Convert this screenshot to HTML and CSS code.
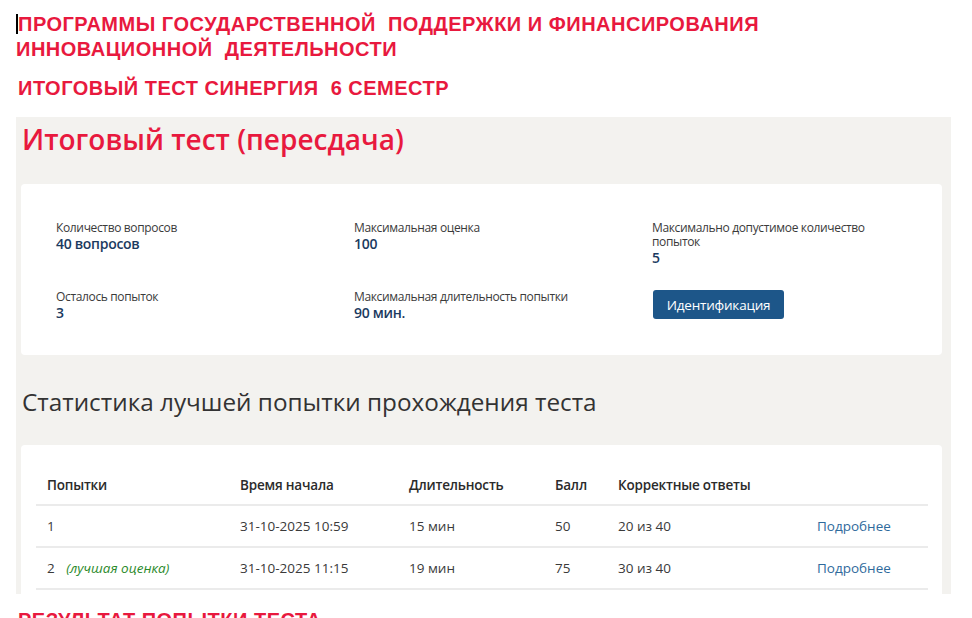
FILE: index.html
```html
<!DOCTYPE html>
<html lang="ru">
<head>
<meta charset="utf-8">
<title>Итоговый тест</title>
<link rel="stylesheet" href="styles.css">
</head>
<body>
<h2 class="red-head first"><span class="caret"></span>ПРОГРАММЫ ГОСУДАРСТВЕННОЙ&nbsp; ПОДДЕРЖКИ И ФИНАНСИРОВАНИЯ ИННОВАЦИОННОЙ&nbsp; ДЕЯТЕЛЬНОСТИ</h2>
<h2 class="red-head second">ИТОГОВЫЙ ТЕСТ СИНЕРГИЯ&nbsp; 6 СЕМЕСТР</h2>

<div class="panel">
  <h1 class="title">Итоговый тест (пересдача)</h1>

  <div class="card info">
    <div class="info-grid">
      <div class="item">
        <div class="label">Количество вопросов</div>
        <div class="value">40 вопросов</div>
      </div>
      <div class="item">
        <div class="label">Максимальная оценка</div>
        <div class="value">100</div>
      </div>
      <div class="item">
        <div class="label">Максимально допустимое количество попыток</div>
        <div class="value">5</div>
      </div>
      <div class="item">
        <div class="label">Осталось попыток</div>
        <div class="value">3</div>
      </div>
      <div class="item">
        <div class="label">Максимальная длительность попытки</div>
        <div class="value">90 мин.</div>
      </div>
      <div class="item">
        <button class="btn">Идентификация</button>
      </div>
    </div>
  </div>

  <h2 class="stats-title">Статистика лучшей попытки прохождения теста</h2>

  <div class="card stats">
    <table class="tbl">
      <colgroup>
        <col class="w1"><col class="w2"><col class="w3"><col class="w4"><col class="w5"><col class="w6">
      </colgroup>
      <thead>
        <tr><th>Попытки</th><th>Время начала</th><th>Длительность</th><th>Балл</th><th>Корректные ответы</th><th></th></tr>
      </thead>
      <tbody>
        <tr><td>1</td><td>31-10-2025 10:59</td><td>15 мин</td><td>50</td><td>20 из 40</td><td><a class="more" href="#">Подробнее</a></td></tr>
        <tr><td>2 <span class="best">(лучшая оценка)</span></td><td>31-10-2025 11:15</td><td>19 мин</td><td>75</td><td>30 из 40</td><td><a class="more" href="#">Подробнее</a></td></tr>
        <tr><td>3</td><td>01-11-2025 09:40</td><td>17 мин</td><td>65</td><td>26 из 40</td><td><a class="more" href="#">Подробнее</a></td></tr>
      </tbody>
    </table>
  </div>
</div>

<h2 class="red-head third">РЕЗУЛЬТАТ ПОПЫТКИ ТЕСТА</h2>
</body>
</html>
```

FILE: styles.css
```css
* { box-sizing: border-box; }

html, body {
  margin: 0;
  padding: 0;
  background: #ffffff;
}

body {
  padding: 12px 21px 0 16px;
  font-family: "Open Sans", "Noto Sans", sans-serif;
  color: #333333;
}

.red-head {
  margin: 0;
  font-family: "Liberation Sans", Arial, sans-serif;
  font-weight: bold;
  font-size: 20px;
  line-height: 25px;
  letter-spacing: 0.5px;
  color: #e8193e;
  text-transform: uppercase;
}

.red-head.first { width: 790px; }
.red-head.second { margin-top: 14px; padding-left: 2px; }
.red-head.third { margin-top: 14px; padding-left: 2px; }

.caret {
  display: inline-block;
  width: 2px;
  height: 20px;
  background: #000;
  vertical-align: -3px;
}

.panel {
  margin-top: 16px;
  height: 477px;
  overflow: hidden;
  background: #f3f2ef;
  padding: 4px 9px 0 5px;
}

.title {
  margin: 0 0 0 1px;
  font-family: "Open Sans", sans-serif;
  font-weight: 600;
  font-size: 28px;
  line-height: 36px;
  color: #e8193e;
}

.card {
  background: #ffffff;
  border-radius: 4px;
}

.info {
  margin-top: 27px;
  padding: 37px 35px 34px 35px;
}

.info-grid {
  display: grid;
  grid-template-columns: 298px 298px 1fr;
  row-gap: 24px;
}

.label {
  font-size: 12px;
  line-height: 14px;
  letter-spacing: -0.35px;
  color: #3a3a3a;
}

.value {
  font-size: 14px;
  font-weight: 600;
  line-height: 17px;
  letter-spacing: -0.3px;
  color: #1b3a60;
}

.btn {
  display: block;
  width: 131px;
  height: 29px;
  margin-left: 1px;
  border: none;
  border-radius: 3px;
  background: #1d5689;
  color: #ffffff;
  font-family: "Open Sans", sans-serif;
  font-size: 13.5px;
  letter-spacing: -0.2px;
  padding: 0;
}

.stats-title {
  margin: 30px 0 0 1px;
  font-family: "Open Sans", sans-serif;
  font-weight: 400;
  font-size: 24.3px;
  line-height: 34px;
  color: #333333;
}

.stats {
  margin-top: 26px;
  padding: 20px 14px 30px 15px;
}

.tbl {
  width: 100%;
  table-layout: fixed;
  border-collapse: collapse;
  font-size: 13.5px;
}

.w1 { width: 193px; }
.w2 { width: 169px; }
.w3 { width: 146px; }
.w4 { width: 63px; }
.w5 { width: 199px; }
.w6 { width: auto; }

.tbl th {
  text-align: left;
  font-weight: 600;
  font-size: 13.5px;
  letter-spacing: -0.2px;
  padding: 0 11px;
  height: 40px;
  color: #2b2b2b;
  border-bottom: 2px solid #ebebeb;
}

.tbl td {
  padding: 0 11px;
  height: 42px;
  color: #3a3a3a;
  border-bottom: 2px solid #ebebeb;
  white-space: nowrap;
}

.best {
  margin-left: 8px;
  font-style: italic;
  color: #2b8a2b;
}

.more {
  color: #2f6a9c;
  text-decoration: none;
}
```
